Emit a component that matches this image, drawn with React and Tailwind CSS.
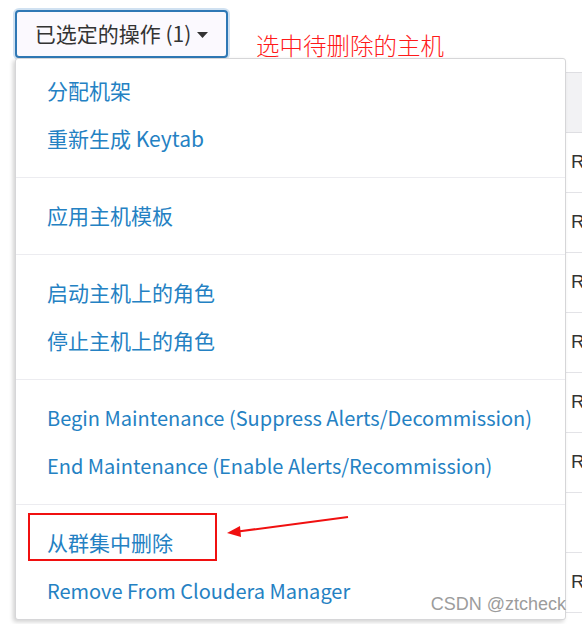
import React from "react";

const font = { fontFamily: '"Noto Sans CJK SC", "Noto Sans", sans-serif' };

// latin: true -> the item is set a touch smaller, like the reference
const groups = [
  [{ t: "分配机架" }, { t: "重新生成 Keytab" }],
  [{ t: "应用主机模板" }],
  [{ t: "启动主机上的角色" }, { t: "停止主机上的角色" }],
  [
    { t: "Begin Maintenance (Suppress Alerts/Decommission)", latin: true },
    { t: "End Maintenance (Enable Alerts/Recommission)", latin: true },
  ],
  [{ t: "从群集中删除" }, { t: "Remove From Cloudera Manager", latin: true }],
];

const rows = ["R", "R", "R", "R", "Ro", "Ro", "", "Ro"];

function Caret() {
  return (
    <svg width="11" height="6" viewBox="0 0 11 6" className="ml-[6px] mt-[2px]">
      <path d="M0 0 L11 0 L5.5 6 Z" fill="#333" />
    </svg>
  );
}

export default function App() {
  return (
    <div
      className="relative w-[582px] h-[624px] overflow-hidden bg-white"
      style={font}
    >
      {/* top bar */}
      <div className="flex items-end pt-[7px] pl-[15px] h-[58px]">
        <button
          type="button"
          className="flex items-center justify-center w-[213px] h-[48px] rounded-[4px] border-2 border-[#2f78b5] bg-[#fbf9fe] text-[#333] text-[21px] shadow-[0_0_0_2px_rgba(120,170,215,0.35)]"
        >
          已选定的操作 (1)
          <Caret />
        </button>
        <span
          className="ml-[28px] mb-[1px] text-[23.5px] leading-none text-[#ff1a1a] font-light"
          style={{ fontFamily: '"Noto Sans CJK SC", serif' }}
        >
          选中待删除的主机
        </span>
      </div>

      {/* table behind the menu */}
      <div className="ml-[300px] mt-[14px] text-[#333] text-[19px]">
        <div className="h-[61px] bg-[#f2f2f4] border-y border-[#dedee2]" />
        {rows.map((r, i) => (
          <div
            key={i}
            className="flex items-center h-[60px] border-b border-[#e3e3e7] pl-[271px] whitespace-nowrap"
            style={{ fontFamily: '"Liberation Sans", sans-serif' }}
          >
            {r}
          </div>
        ))}
      </div>

      {/* dropdown menu */}
      <div className="absolute left-[15px] top-[58px] w-[551px] h-[562px] bg-white border border-[#d6d6d8] rounded-[3px] shadow-[-2px_2px_4px_rgba(0,0,0,0.18)] pt-[8px]">
        {groups.map((g, gi) => (
          <div key={gi}>
            {gi > 0 && <div className="h-px bg-[#ececf0] my-[14px]" />}
            {g.map((item) => (
              <div
                key={item.t}
                className={
                  item.latin
                    ? "flex items-center h-[48px] pl-[31px] text-[20px] text-[#2481c3] whitespace-nowrap"
                    : "flex items-center h-[48px] pl-[31px] text-[21px] text-[#2481c3] whitespace-nowrap"
                }
              >
                {item.t}
              </div>
            ))}
          </div>
        ))}
      </div>

      {/* annotation */}
      <div className="absolute left-[28px] top-[513px] w-[189px] h-[48px] border-2 border-[#f01010]" />
      <svg
        className="absolute left-0 top-0"
        width="582"
        height="624"
        viewBox="0 0 582 624"
      >
        <line x1="348" y1="517" x2="238" y2="531.5" stroke="#f01010" strokeWidth="2" />
        <path d="M227 533 L240 526 L241 537 Z" fill="#f01010" />
      </svg>

      <div
        className="absolute right-[16px] bottom-[6px] text-[18px] text-[#9c9c9c]"
        style={{ fontFamily: '"Liberation Sans", sans-serif' }}
      >
        CSDN @ztcheck
      </div>
    </div>
  );
}
